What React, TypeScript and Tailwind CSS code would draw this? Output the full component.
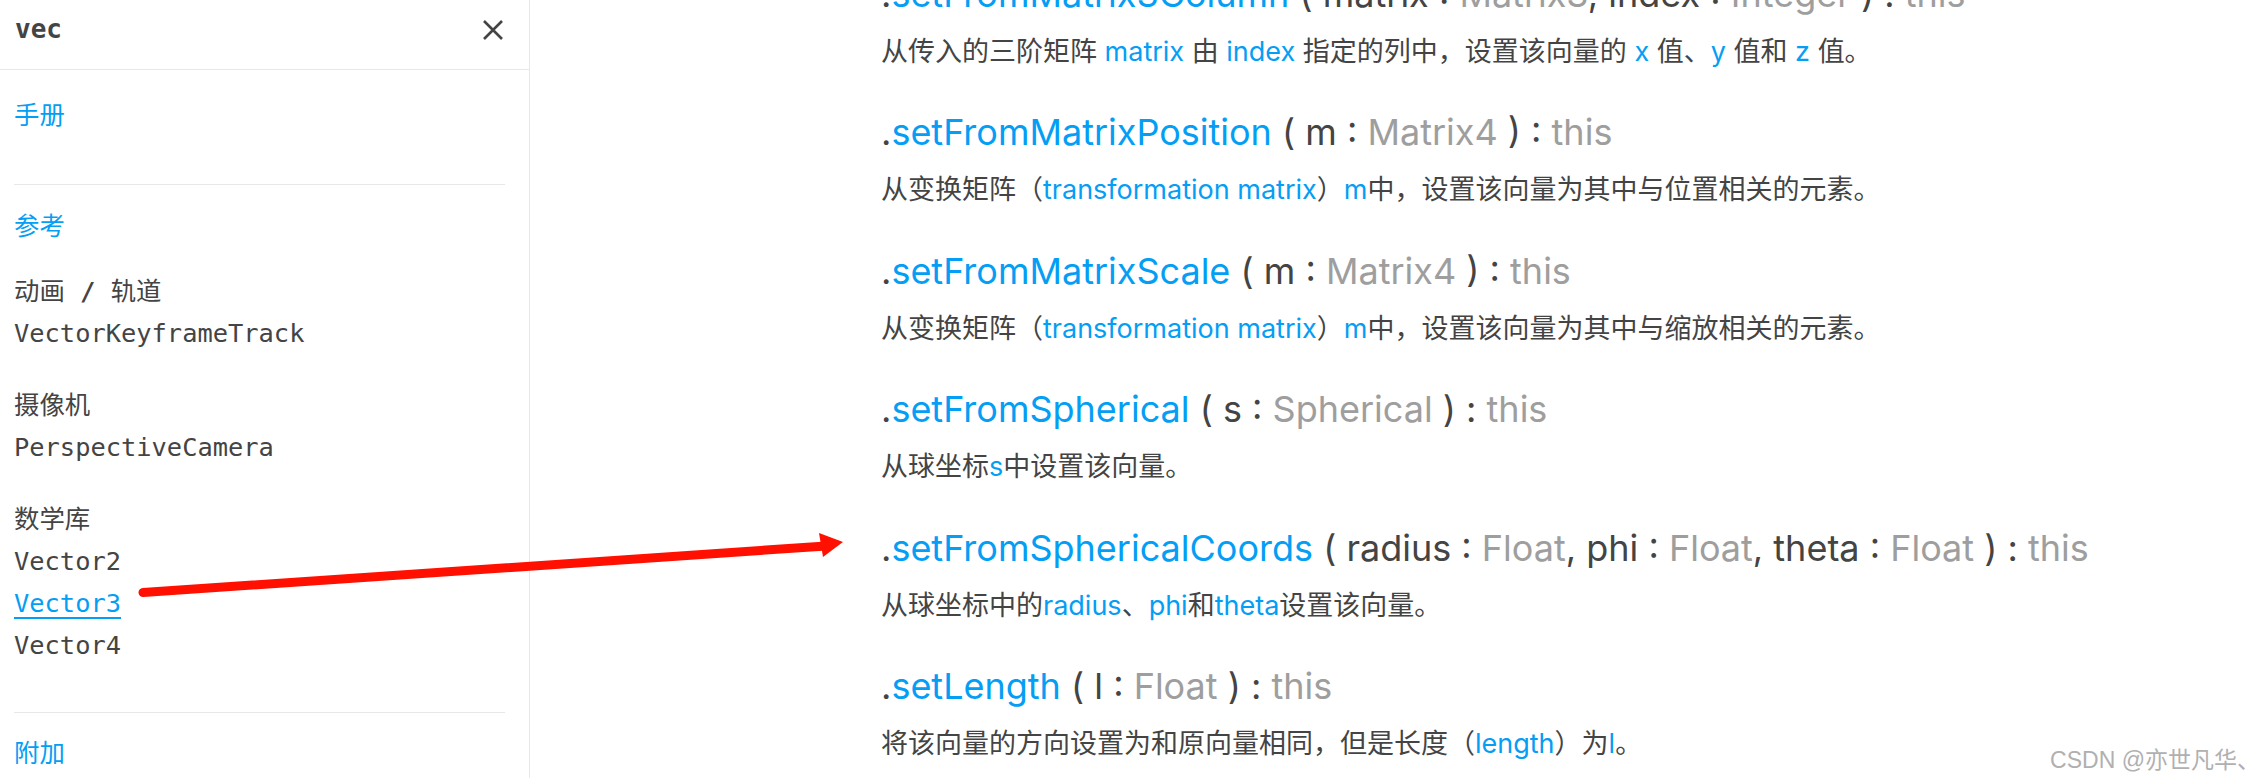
import React from "react";

const BLUE = "text-[#049EF4]";
const GRAY = "text-[#9e9e9e]";

function Title({ name, params }: { name: string; params: { n: string; t: string }[] }) {
  return (
    <div className="text-[36px] leading-[46px] text-[#444] whitespace-nowrap">
      .<span className={BLUE}>{name}</span> ({" "}
      {params.map((p, i) => (
        <React.Fragment key={i}>
          {p.n} : <span className={GRAY}>{p.t}</span>
          {i < params.length - 1 ? ", " : " "}
        </React.Fragment>
      ))}
      ) : <span className={GRAY}>this</span>
    </div>
  );
}

function Desc({ children }: { children: React.ReactNode }) {
  return <div className="mt-[15px] text-[27px] leading-[40px] text-[#444] whitespace-nowrap">{children}</div>;
}

function B({ children }: { children: React.ReactNode }) {
  return <span className={BLUE}>{children}</span>;
}

export default function App() {
  return (
    <div
      className="relative w-[2260px] h-[778px] overflow-hidden bg-white flex"
      style={{ fontFamily: "Inter, 'Noto Sans CJK SC', sans-serif" }}
    >
      {/* Sidebar */}
      <div
        className="w-[530px] h-full border-r border-[#E8E8E8] flex flex-col shrink-0 text-[#444]"
        style={{ fontFamily: "'DejaVu Sans Mono', 'Noto Sans CJK SC', monospace" }}
      >
        <div className="h-[70px] border-b border-[#E8E8E8] flex items-center justify-between pl-[15px] pr-[26px] pb-[10px] shrink-0">
          <div className="text-[26px] font-bold text-[#444]">vec</div>
          <svg width="20" height="20" viewBox="0 0 20 20">
            <path d="M1 1 L19 19 M19 1 L1 19" stroke="#444" strokeWidth="2.6" strokeLinecap="butt" />
          </svg>
        </div>
        <div className="pl-[14px] pr-[24px] text-[25.4px] leading-[42px]">
          <div className={`mt-[24px] ${BLUE}`}>手册</div>
          <div className="mt-[48px] h-px bg-[#E8E8E8]" />
          <div className={`mt-[20px] ${BLUE}`}>参考</div>
          <div className="mt-[23px]">
            动画 <span className="font-bold">/</span> 轨道
          </div>
          <div>VectorKeyframeTrack</div>
          <div className="mt-[30px]">摄像机</div>
          <div>PerspectiveCamera</div>
          <div className="mt-[30px]">数学库</div>
          <div>Vector2</div>
          <div className={`${BLUE} underline underline-offset-[5px] decoration-[2px]`}>Vector3</div>
          <div>Vector4</div>
          <div className="mt-[46px] h-px bg-[#E8E8E8]" />
          <div className={`mt-[19px] ${BLUE}`}>附加</div>
        </div>
      </div>

      {/* Main content */}
      <div className="flex-1 pl-[351px]">
        <div className="-mt-[29px] flex flex-col">
          <Title
            name="setFromMatrix3Column"
            params={[
              { n: "matrix", t: "Matrix3" },
              { n: "index", t: "Integer" },
            ]}
          />
          <Desc>
            从传入的三阶矩阵 <B>matrix</B> 由 <B>index</B> 指定的列中，设置该向量的 <B>x</B> 值、<B>y</B> 值和 <B>z</B> 值。
          </Desc>

          <div className="mt-[37.4px]">
            <Title name="setFromMatrixPosition" params={[{ n: "m", t: "Matrix4" }]} />
          </div>
          <Desc>
            从变换矩阵（<B>transformation matrix</B>）<B>m</B>中，设置该向量为其中与位置相关的元素。
          </Desc>

          <div className="mt-[37.4px]">
            <Title name="setFromMatrixScale" params={[{ n: "m", t: "Matrix4" }]} />
          </div>
          <Desc>
            从变换矩阵（<B>transformation matrix</B>）<B>m</B>中，设置该向量为其中与缩放相关的元素。
          </Desc>

          <div className="mt-[37.4px]">
            <Title name="setFromSpherical" params={[{ n: "s", t: "Spherical" }]} />
          </div>
          <Desc>
            从球坐标<B>s</B>中设置该向量。
          </Desc>

          <div className="mt-[37.4px]">
            <Title
              name="setFromSphericalCoords"
              params={[
                { n: "radius", t: "Float" },
                { n: "phi", t: "Float" },
                { n: "theta", t: "Float" },
              ]}
            />
          </div>
          <Desc>
            从球坐标中的<B>radius</B>、<B>phi</B>和<B>theta</B>设置该向量。
          </Desc>

          <div className="mt-[37.4px]">
            <Title name="setLength" params={[{ n: "l", t: "Float" }]} />
          </div>
          <Desc>
            将该向量的方向设置为和原向量相同，但是长度（<B>length</B>）为<B>l</B>。
          </Desc>
        </div>
      </div>

      {/* Red annotation arrow */}
      <svg
        className="absolute inset-0 pointer-events-none"
        width="2260"
        height="778"
        viewBox="0 0 2260 778"
      >
        <line x1="143" y1="592.5" x2="826" y2="546" stroke="#ff1000" strokeWidth="9" strokeLinecap="round" />
        <polygon points="843,542 819,533 823,557" fill="#ff1000" />
      </svg>

      {/* Watermark */}
      <div
        className="absolute right-0 bottom-[4px] text-[23px] leading-[28px] text-[#b0b0b0]"
        style={{ fontFamily: "'Liberation Sans', 'Noto Sans CJK SC', sans-serif" }}
      >
        CSDN @亦世凡华、
      </div>
    </div>
  );
}
